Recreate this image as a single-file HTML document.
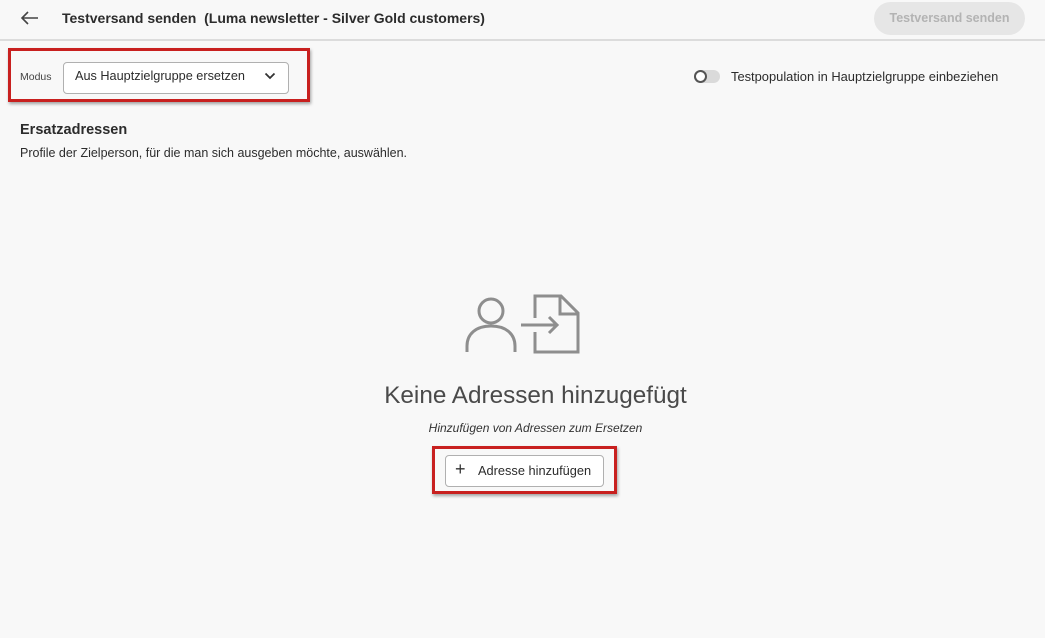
<!DOCTYPE html>
<html><head><style>
body{margin:0;width:1045px;height:638px;background:#f8f8f8;font-family:"Liberation Sans",sans-serif;color:#222;position:relative;overflow:hidden}
.hdr{position:absolute;left:0;top:0;width:1045px;height:39px;border-bottom:2px solid #dcdcdc}
.a{position:absolute;white-space:nowrap}
</style></head><body>
<div class="hdr"></div>
<svg class="a" style="left:20px;top:10px" width="20" height="16" viewBox="0 0 20 16"><path d="M18 8H2M8 2L2 8l6 6" stroke="#444" stroke-width="1.6" fill="none"/></svg>
<div class="a" style="left:62px;top:10px;font-size:14px;font-weight:bold;color:#2c2c2c">Testversand senden&nbsp; (Luma newsletter - Silver Gold customers)</div>
<div class="a" style="left:874px;top:2px;width:151px;height:33px;border-radius:17px;background:#e6e6e6;color:#b3b3b3;font-size:12.5px;font-weight:bold;text-align:center;line-height:33px">Testversand senden</div>
<div class="a" style="left:8px;top:48px;width:296px;height:48px;border:3px solid #c8201f;box-shadow:1px 2px 3px rgba(0,0,0,.35)"></div>
<div class="a" style="left:20px;top:71px;font-size:10.5px;color:#444">Modus</div>
<div class="a" style="left:63px;top:62px;width:224px;height:30px;border:1px solid #b0b0b0;border-radius:4px;background:#fff"></div>
<div class="a" style="left:75px;top:69px;font-size:12.7px;color:#2c2c2c">Aus Hauptzielgruppe ersetzen</div>
<svg class="a" style="left:264px;top:72px" width="12" height="8" viewBox="0 0 12 8"><path d="M1.5 1.5l4.5 4.5 4.5-4.5" stroke="#333" stroke-width="1.8" fill="none"/></svg>
<div class="a" style="left:694px;top:70px;width:26px;height:13px;border-radius:7px;background:#dadada"></div>
<div class="a" style="left:694px;top:70px;width:9px;height:9px;border-radius:50%;border:2px solid #555;background:#fff"></div>
<div class="a" style="left:731px;top:69px;font-size:12.9px;color:#2c2c2c">Testpopulation in Hauptzielgruppe einbeziehen</div>
<div class="a" style="left:20px;top:122px;font-size:14.5px;font-weight:bold;color:#2c2c2c">Ersatzadressen</div>
<div class="a" style="left:20px;top:146px;font-size:12.5px;color:#2c2c2c">Profile der Zielperson, für die man sich ausgeben möchte, auswählen.</div>
<svg class="a" style="left:460px;top:290px" width="125" height="66" viewBox="460 290 125 66" fill="none" stroke="#8e8e8e" stroke-width="3">
<circle cx="491" cy="311" r="12"/>
<path d="M467 352v-6c0-12 9-20 24-20s24 8 24 20v6"/>
<path d="M535 318v-22h26l17 17v39h-43v-20"/>
<path d="M560 296v18h18"/>
<path d="M521 325h36M549 317l8 8-8 8"/>
</svg>
<div class="a" style="left:13px;width:1045px;top:382px;text-align:center;font-size:24.3px;color:#4a4a4a">Keine Adressen hinzugefügt</div>
<div class="a" style="left:13px;width:1045px;top:421px;text-align:center;font-size:12px;font-style:italic;color:#333">Hinzufügen von Adressen zum Ersetzen</div>
<div class="a" style="left:432px;top:446px;width:179px;height:42px;border:3px solid #c8201f;box-shadow:1px 2px 3px rgba(0,0,0,.35)"></div>
<div class="a" style="left:445px;top:455px;width:157px;height:30px;border:1px solid #b0b0b0;border-radius:4px;background:#fff"></div>
<div class="a" style="left:455px;top:459px;font-size:18px;color:#333">+</div>
<div class="a" style="left:478px;top:463px;font-size:12.8px;color:#2c2c2c">Adresse hinzufügen</div>
</body></html>
